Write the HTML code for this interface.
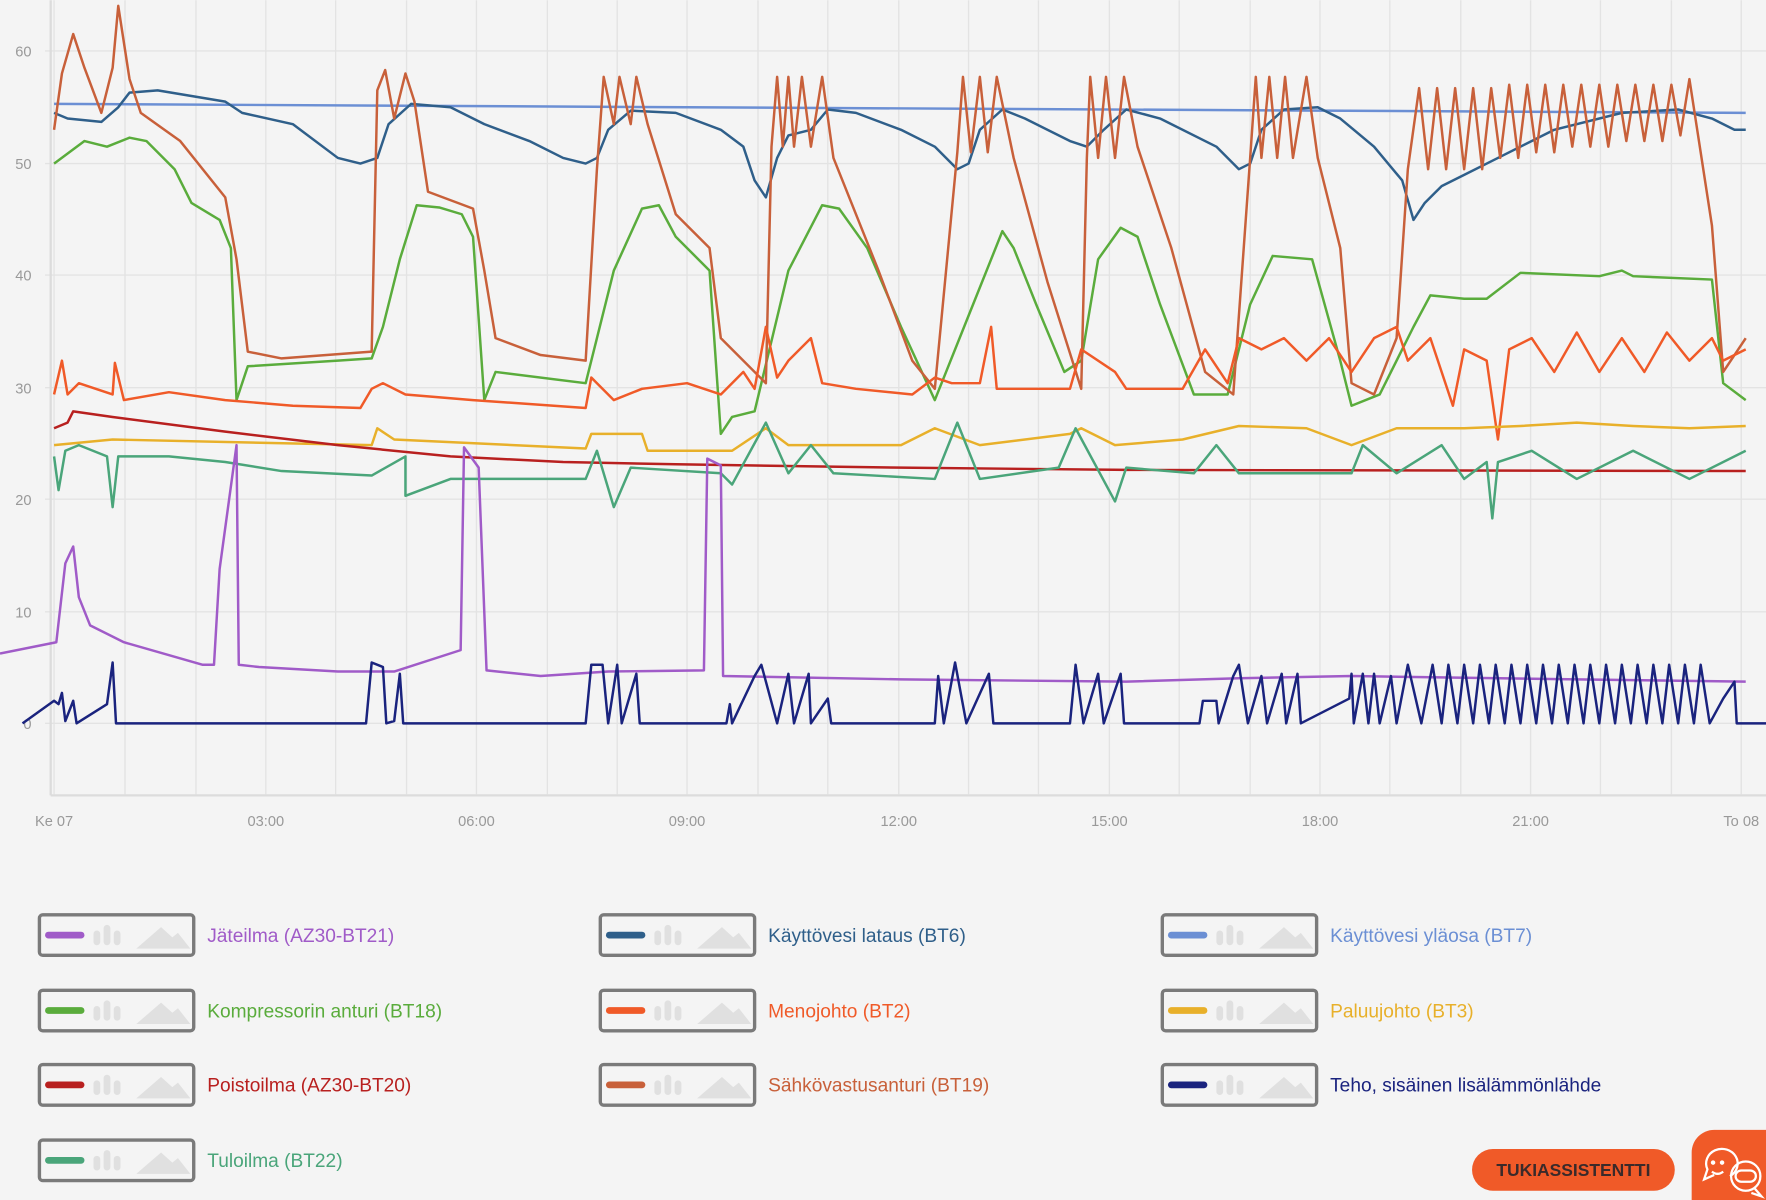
<!DOCTYPE html>
<html><head><meta charset="utf-8"><style>
html,body{margin:0;padding:0;background:#f4f4f4;overflow:hidden}
svg{display:block}
text{font-family:"Liberation Sans",sans-serif}
</style></head><body>
<svg width="1766" height="1200" viewBox="0 0 1568 1065" xmlns="http://www.w3.org/2000/svg">
<rect width="1568" height="1065" fill="#f4f4f4"/>
<g stroke="#e3e3e3" stroke-width="1.2" fill="none">
<path d="M40 45H1568M40 145H1568M40 244H1568M40 344H1568M40 443H1568M40 543H1568M40 642H1568"/>
<path d="M48 0V705M111 0V705M174 0V705M236 0V705M298 0V705M361 0V705M423 0V705M486 0V705M548 0V705M610 0V705M673 0V705M735 0V705M798 0V705M860 0V705M922 0V705M985 0V705M1047 0V705M1110 0V705M1172 0V705M1234 0V705M1297 0V705M1359 0V705M1421 0V705M1484 0V705M1546 0V705"/>
<path d="M45 706H1568" stroke="#dcdcdc" stroke-width="2"/>
<path d="M45 0V706" stroke="#dcdcdc" stroke-width="2"/>
</g>
<g fill="#999" font-size="13" text-anchor="end">
<text x="28" y="50">60</text><text x="28" y="150">50</text><text x="28" y="249">40</text><text x="28" y="349">30</text><text x="28" y="448">20</text><text x="28" y="548">10</text><text x="28" y="647">0</text>
</g>
<g fill="#999" font-size="13" text-anchor="middle">
<text x="48" y="733">Ke 07</text><text x="236" y="733">03:00</text><text x="423" y="733">06:00</text><text x="610" y="733">09:00</text><text x="798" y="733">12:00</text><text x="985" y="733">15:00</text><text x="1172" y="733">18:00</text><text x="1359" y="733">21:00</text><text x="1546" y="733">To 08</text>
</g>
<g fill="none" stroke-width="2.2" stroke-linejoin="round">
<polyline stroke="#6b8fd4" points="48,92 1550,100"/>
<polyline stroke="#2f5f8a" points="48,100 60,105 90,108 105,95 115,82 140,80 200,90 215,100 260,110 300,140 320,145 335,140 345,110 365,92 400,95 430,110 470,125 500,140 520,145 530,140 540,115 560,98 600,100 640,115 660,130 670,160 680,175 690,140 700,120 720,115 735,97 760,100 800,115 830,130 850,150 860,145 870,115 890,97 910,105 950,125 965,130 980,115 1000,97 1030,105 1080,130 1100,150 1110,145 1120,115 1140,97 1170,95 1190,105 1220,130 1245,160 1255,195 1265,180 1280,165 1300,155 1330,140 1380,115 1440,100 1490,97 1520,105 1540,115 1550,115"/>
<polyline stroke="#5aac3c" points="48,145 75,125 95,130 115,122 130,125 155,150 170,180 195,195 205,220 210,355 220,325 300,320 330,318 340,290 355,230 370,182 390,184 410,190 420,210 430,355 440,330 520,340 530,300 545,240 570,185 585,182 600,210 630,240 640,385 650,370 670,365 700,240 730,182 745,185 770,220 800,290 830,355 840,330 860,280 890,205 900,220 920,270 945,330 960,320 975,230 995,202 1010,210 1030,270 1060,350 1090,350 1110,270 1130,227 1165,230 1190,320 1200,360 1225,350 1255,290 1270,262 1300,265 1320,265 1350,242 1420,245 1440,240 1450,245 1520,248 1530,340 1550,355"/>
<polyline stroke="#c8603a" points="48,115 55,65 65,30 75,60 90,100 100,60 105,5 115,70 125,100 160,125 200,175 210,230 220,312 250,318 330,312 335,80 342,62 350,105 360,65 368,90 380,170 420,185 430,240 440,300 480,315 520,320 530,150 536,68 545,110 550,68 560,110 565,68 575,110 600,190 630,220 640,300 680,340 685,130 690,68 695,130 700,68 705,130 712,68 720,130 730,68 740,140 780,240 810,320 830,345 850,135 855,68 862,135 870,68 877,135 885,68 900,140 930,250 960,345 965,140 968,68 975,140 982,68 990,140 998,68 1010,130 1040,220 1070,330 1095,350 1110,140 1115,68 1120,140 1127,68 1134,140 1141,68 1148,140 1160,68 1170,140 1190,220 1200,340 1220,350 1240,300 1250,150 1260,78 1268,150 1276,78 1284,150 1292,78 1300,150 1308,78 1316,150 1324,78 1332,140 1340,75 1348,140 1356,75 1364,135 1372,75 1380,135 1388,75 1396,130 1404,75 1412,130 1420,75 1428,130 1436,75 1444,125 1452,75 1460,125 1468,75 1476,125 1484,75 1492,120 1500,70 1520,200 1530,330 1550,300"/>
<polyline stroke="#f05a28" points="48,350 55,320 60,350 70,340 100,350 102,322 110,355 150,348 200,355 260,360 320,362 330,345 340,340 360,350 420,355 520,362 525,335 545,355 570,345 610,340 640,350 660,330 670,345 680,290 690,335 700,320 720,300 730,340 760,345 810,350 830,335 845,340 870,340 880,290 885,345 900,345 950,345 960,310 990,330 1000,345 1050,345 1070,310 1090,340 1100,300 1120,310 1140,300 1160,320 1180,300 1200,330 1220,300 1240,290 1250,320 1270,300 1290,360 1300,310 1320,320 1330,390 1340,310 1360,300 1380,330 1400,295 1420,330 1440,300 1460,330 1480,295 1500,320 1520,300 1530,320 1550,310"/>
<polyline stroke="#e8b02a" points="48,395 100,390 330,395 335,380 350,390 520,398 525,385 570,385 575,400 650,400 680,380 700,395 800,395 830,380 870,395 950,385 960,380 990,395 1050,390 1100,378 1160,380 1200,395 1240,380 1300,380 1350,378 1400,375 1450,378 1500,380 1550,378"/>
<polyline stroke="#b8201f" points="48,380 60,375 65,365 100,370 200,383 300,395 400,405 500,410 600,412 800,415 1000,417 1550,418"/>
<polyline stroke="#4aa57a" points="48,405 52,435 58,400 70,395 95,405 100,450 105,405 150,405 200,410 250,418 330,422 360,405 360,440 400,425 520,425 530,400 545,450 560,415 640,420 650,430 680,375 700,420 720,395 740,420 830,425 850,375 870,425 940,415 955,380 990,445 1000,415 1060,420 1080,395 1100,420 1200,420 1210,395 1240,420 1280,395 1300,425 1320,410 1325,460 1330,410 1360,400 1400,425 1450,400 1500,425 1550,400"/>
<polyline stroke="#a05bc8" points="0,580 50,570 58,500 65,485 70,530 80,555 110,570 180,590 190,590 195,505 210,395 212,590 230,592 300,596 350,596 409,577 412,397 425,415 432,595 480,600 540,596 625,595 628,407 640,413 642,600 800,603 1000,605 1100,602 1200,600 1400,603 1550,605"/>
<polyline stroke="#1a237e" points="20,642 48,622 52,625 55,615 58,640 65,622 68,642 95,625 100,588 103,642 325,642 330,588 340,592 343,642 350,640 355,598 358,642 520,642 525,590 535,590 540,642 548,590 552,642 565,598 568,642 645,642 648,625 650,642 670,600 676,590 690,642 700,598 705,642 718,598 720,642 735,620 738,642 830,642 833,600 838,642 848,588 858,642 878,598 882,642 950,642 955,590 962,642 975,598 980,642 995,598 998,642 1065,642 1068,622 1080,622 1082,642 1095,600 1100,590 1108,642 1120,600 1125,642 1138,598 1142,642 1152,598 1155,642 1198,620 1200,598 1202,642 1210,598 1215,642 1220,598 1225,642 1235,600 1240,642 1250,590 1262,642 1272,590 1280,642 1286,590 1294,642 1300,590 1308,642 1314,590 1322,642 1328,590 1336,642 1342,590 1350,642 1356,590 1364,642 1370,590 1378,642 1384,590 1392,642 1398,590 1406,642 1412,590 1420,642 1426,590 1434,642 1440,590 1448,642 1454,590 1462,642 1468,590 1476,642 1482,590 1490,642 1496,590 1504,642 1510,590 1518,642 1530,620 1540,605 1542,642 1568,642"/>
</g>
<defs>
<g id="icn">
<rect x="0" y="0" width="137" height="36" rx="3" fill="none" stroke="#7a7a7a" stroke-width="3"/>
<rect x="48" y="14" width="6" height="13" rx="3" fill="#e0e0e0"/>
<rect x="57" y="9" width="6" height="18" rx="3" fill="#e0e0e0"/>
<rect x="66" y="14" width="6" height="13" rx="3" fill="#e0e0e0"/>
<path d="M86 30L108 11L118 20L123 16L134 30Z" fill="#e0e0e0"/>
</g>
</defs>
<g font-size="17">
<use href="#icn" x="35" y="812"/><rect x="40" y="827" width="35" height="6" rx="3" fill="#a05bc8"/><text x="184" y="836" fill="#a05bc8">Jäteilma (AZ30-BT21)</text>
<use href="#icn" x="533" y="812"/><rect x="538" y="827" width="35" height="6" rx="3" fill="#2f5f8a"/><text x="682" y="836" fill="#2f5f8a">Käyttövesi lataus (BT6)</text>
<use href="#icn" x="1032" y="812"/><rect x="1037" y="827" width="35" height="6" rx="3" fill="#6b8fd4"/><text x="1181" y="836" fill="#6b8fd4">Käyttövesi yläosa (BT7)</text>
<use href="#icn" x="35" y="879"/><rect x="40" y="894" width="35" height="6" rx="3" fill="#5aac3c"/><text x="184" y="903" fill="#5aac3c">Kompressorin anturi (BT18)</text>
<use href="#icn" x="533" y="879"/><rect x="538" y="894" width="35" height="6" rx="3" fill="#f05a28"/><text x="682" y="903" fill="#f05a28">Menojohto (BT2)</text>
<use href="#icn" x="1032" y="879"/><rect x="1037" y="894" width="35" height="6" rx="3" fill="#e8b02a"/><text x="1181" y="903" fill="#e8b02a">Paluujohto (BT3)</text>
<use href="#icn" x="35" y="945"/><rect x="40" y="960" width="35" height="6" rx="3" fill="#b8201f"/><text x="184" y="969" fill="#b8201f">Poistoilma (AZ30-BT20)</text>
<use href="#icn" x="533" y="945"/><rect x="538" y="960" width="35" height="6" rx="3" fill="#c8603a"/><text x="682" y="969" fill="#c8603a">Sähkövastusanturi (BT19)</text>
<use href="#icn" x="1032" y="945"/><rect x="1037" y="960" width="35" height="6" rx="3" fill="#1a237e"/><text x="1181" y="969" fill="#1a237e">Teho, sisäinen lisälämmönlähde</text>
<use href="#icn" x="35" y="1012"/><rect x="40" y="1027" width="35" height="6" rx="3" fill="#4aa57a"/><text x="184" y="1036" fill="#4aa57a">Tuloilma (BT22)</text>
</g>
<rect x="1307" y="1020" width="180" height="37" rx="18.5" fill="#f05a28"/>
<text x="1397" y="1044" text-anchor="middle" font-size="15.5" font-weight="bold" fill="#3a2a2a">TUKIASSISTENTTI</text>
<rect x="1502" y="1003" width="90" height="90" rx="20" fill="#f05a28"/>
<g fill="none" stroke="#fff" stroke-width="2">
<path d="M1536 1044a14 13 0 1 0-20-6l-3 9 9-4"/>
<circle cx="1521" cy="1032" r="1" fill="#fff"/><circle cx="1529" cy="1032" r="1" fill="#fff"/>
<path d="M1520 1040q5 4 10 0"/>
<circle cx="1550" cy="1044" r="13"/>
<rect x="1541" y="1039" width="18" height="10" rx="5"/>
<path d="M1558 1055l6 7-9-3"/>
</g>
</svg>
</body></html>
